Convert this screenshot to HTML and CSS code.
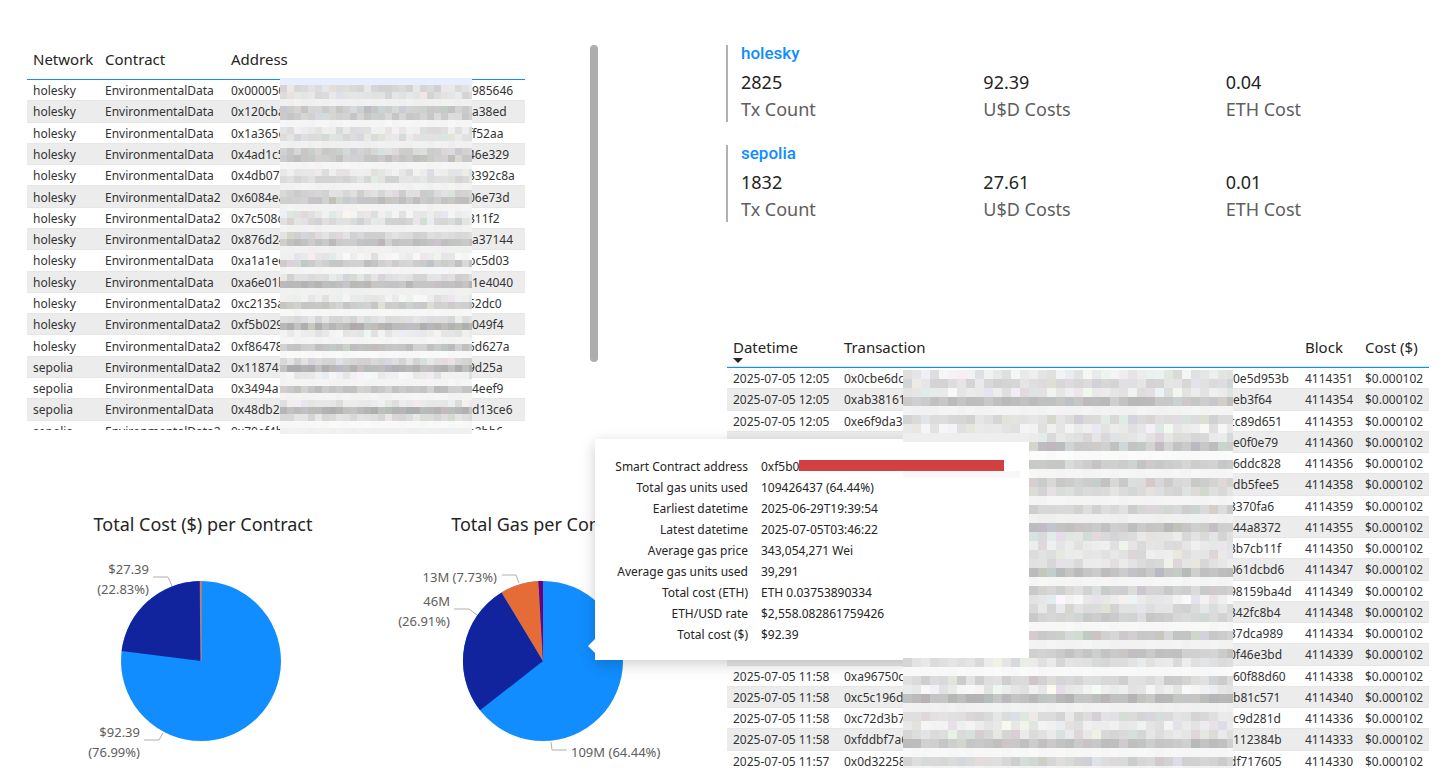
FILE: index.html
```html
<!DOCTYPE html>
<html lang="en">
<head>
<meta charset="utf-8">
<title>Contract costs</title>
<link rel="stylesheet" href="styles.css">
</head>
<body>
<main class="report">
  <section class="column">
    <div class="panel panel-contracts">
      <div class="viewport">
        <table class="grid contracts">
          <colgroup><col class="c-network"><col class="c-contract"><col></colgroup>
          <thead><tr><th>Network</th><th>Contract</th><th>Address</th></tr></thead>
          <tbody id="contracts"></tbody>
        </table>
      </div>
      <canvas class="mosaic mosaic-contracts" id="mosaic-contracts" width="192" height="356"></canvas>
      <div class="thumb"></div>
    </div>
    <div class="charts">
      <figure class="chart">
        <figcaption>Total Cost ($) per Contract</figcaption>
        <svg viewBox="0 0 342 230" role="img" aria-label="Total Cost ($) per Contract">
          <g transform="translate(171 116)">
            <circle r="80" fill="#118dff"/>
            <path d="M0 0L-79.4 -10A80 80 0 0 1 -.9 -80Z" fill="#12239e"/>
            <path d="M0 0L-.9 -80H.3Z" fill="#e66c37" stroke="#e6906c" stroke-width=".5"/>
          </g>
          <g class="leader"><path d="M123 32H138L142 41"/><path d="M114 195H129L133 188"/></g>
          <g class="label end">
            <text x="119" y="29">$27.39</text><text x="119" y="49">(22.83%)</text>
            <text x="110" y="192">$92.39</text><text x="110" y="212">(76.99%)</text>
          </g>
        </svg>
      </figure>
      <figure class="chart">
        <figcaption>Total Gas per Contract</figcaption>
        <svg viewBox="0 0 342 230" role="img" aria-label="Total Gas per Contract">
          <g transform="translate(171 116)">
            <circle r="80" fill="#118dff"/>
            <path d="M0 0L-63 49.3A80 80 0 0 1 -41.4 -68.5Z" fill="#12239e"/>
            <path d="M0 0L-41.4 -68.5A80 80 0 0 1 -4.6 -79.9Z" fill="#e66c37"/>
            <path d="M0 0L-4.6 -79.9A80 80 0 0 1 0 -80Z" fill="#6b007b"/>
          </g>
          <g class="leader"><path d="M130 30H144L147 38"/><path d="M82 64H97L105 70"/><path d="M179 197L180 205H195"/></g>
          <g class="label end">
            <text x="125" y="37">13M (7.73%)</text>
            <text x="78" y="61">46M</text><text x="78" y="81">(26.91%)</text>
          </g>
          <g class="label"><text x="199" y="212">109M (64.44%)</text></g>
        </svg>
      </figure>
    </div>
  </section>

  <section class="column">
    <article class="card">
      <h2>holesky</h2>
      <dl>
        <div><dd>2825</dd><dt>Tx Count</dt></div>
        <div><dd>92.39</dd><dt>U$D Costs</dt></div>
        <div><dd>0.04</dd><dt>ETH Cost</dt></div>
      </dl>
    </article>
    <article class="card">
      <h2>sepolia</h2>
      <dl>
        <div><dd>1832</dd><dt>Tx Count</dt></div>
        <div><dd>27.61</dd><dt>U$D Costs</dt></div>
        <div><dd>0.01</dd><dt>ETH Cost</dt></div>
      </dl>
    </article>
    <div class="panel panel-transactions">
      <div class="viewport">
        <table class="grid transactions">
          <colgroup><col class="c-date"><col><col class="c-block"><col class="c-cost"></colgroup>
          <thead><tr><th aria-sort="descending">Datetime<span class="sort"></span></th><th>Transaction</th><th>Block</th><th>Cost ($)</th></tr></thead>
          <tbody id="transactions"></tbody>
        </table>
      </div>
      <canvas class="mosaic mosaic-transactions" id="mosaic-transactions" width="330" height="398"></canvas>
    </div>
  </section>

  <aside class="tooltip" role="tooltip">
    <dl>
      <dt>Smart Contract address</dt><dd class="redacted">0xf5b0<span class="bar"></span></dd>
      <dt>Total gas units used</dt><dd>109426437 (64.44%)</dd>
      <dt>Earliest datetime</dt><dd>2025-06-29T19:39:54</dd>
      <dt>Latest datetime</dt><dd>2025-07-05T03:46:22</dd>
      <dt>Average gas price</dt><dd>343,054,271 Wei</dd>
      <dt>Average gas units used</dt><dd>39,291</dd>
      <dt>Total cost (ETH)</dt><dd>ETH 0.03753890334</dd>
      <dt>ETH/USD rate</dt><dd>$2,558.082861759426</dd>
      <dt>Total cost ($)</dt><dd>$92.39</dd>
    </dl>
  </aside>
</main>
<script src="report.js"></script>
</body>
</html>
```
FILE: styles.css
```css
* { box-sizing: border-box; }
body {
  margin: 0;
  background: #fff;
  color: #252423;
  font-family: "Noto Sans", "Open Sans", sans-serif;
  font-size: 12px;
}
.report {
  position: relative;
  display: grid;
  grid-template-columns: 700fr 702fr;
  min-height: 100vh;
  padding: 45px 12px 0 27px;
  overflow: hidden;
}
.column { min-width: 0; }
dl, dd, h2, figure { margin: 0; }

/* tables */
.panel { position: relative; }
.panel-contracts { width: 572px; }
.panel-transactions { margin-top: 111px; }
.viewport { overflow: hidden; }
.panel-contracts .viewport { height: 385px; width: 498px; }
.panel-transactions .viewport { height: 435px; }
.grid { width: 100%; table-layout: fixed; border-spacing: 0; }
.contracts { height: 397px; }
.transactions { height: 439px; }
.c-network { width: 72px; }
.c-contract { width: 126px; }
.c-date { width: 111px; }
.c-block { width: 60px; }
.c-cost { width: 70px; }
.grid th {
  height: 35px;
  padding: 0 0 0 6px;
  border-bottom: 1px solid #118dff;
  text-align: left;
  vertical-align: top;
  font-size: 15px;
  font-weight: 400;
  line-height: 28px;
  position: relative;
  white-space: nowrap;
}
.transactions th { box-shadow: inset 0 -1px #d6eaff; }
.grid td {
  padding: 2px 0 0 6px;
  border-bottom: 1px solid #e6e6e6;
  line-height: 18px;
  white-space: nowrap;
  color: #333;
}
.grid tbody tr:nth-child(even) td { background: #ececec; }
.sort {
  position: absolute;
  left: 6px;
  bottom: 4px;
  border: solid transparent;
  border-width: 5px 5px 0;
  border-top-color: #252423;
}
.hash { display: flex; }
.contracts .head { width: 241px; }
.transactions .head { width: 389px; }
.cut { margin-left: -4px; }
.thumb {
  position: absolute;
  top: 0;
  right: 1px;
  width: 8px;
  height: 317px;
  border-radius: 4px;
  background: #adadad;
}
.mosaic { position: absolute; z-index: 2; }
.mosaic-contracts { left: 253px; top: 33px; }
.mosaic-transactions { left: 176px; top: 37px; }

/* pie charts */
.charts {
  display: grid;
  grid-template-columns: 342px 342px;
  margin: 80px 0 0 3px;
}
.chart figcaption {
  height: 35px;
  padding-left: 4px;
  text-align: center;
  font-size: 18px;
  line-height: 28px;
}
.chart svg { display: block; width: 100%; }
.label { font-size: 13px; fill: #605e5c; }
.end { text-anchor: end; }
.leader { fill: none; stroke: #b3b0ad; stroke-width: 1; }

/* summary cards */
.card {
  height: 77px;
  margin-left: -1px;
  padding-left: 13px;
  border-left: 2px solid #b3b0ad;
}
.card + .card { margin-top: 23px; }
.card h2 {
  color: #118dff;
  font: 500 17px/16px Roboto, sans-serif;
  margin-bottom: 8px;
}
.card dl { display: grid; grid-template-columns: 242fr 242fr 203fr; }
.card dl div { display: flex; flex-direction: column; font-size: 18px; line-height: 27px; }
.card dt { color: #605e5c; }

/* chart tooltip */
.tooltip {
  position: absolute;
  left: 595px;
  top: 439px;
  width: 434px;
  padding: 17px 16px 15px;
  background: #fff;
  box-shadow: 0 4px 14px rgba(0, 0, 0, .2);
}
.tooltip::before {
  content: "";
  position: absolute;
  left: -7px;
  bottom: 7px;
  border: solid transparent;
  border-width: 7px 7px 7px 0;
  border-right-color: #fff;
}
.tooltip dl {
  display: grid;
  grid-template-columns: 137px 1fr;
  column-gap: 13px;
  line-height: 21px;
  white-space: nowrap;
}
.tooltip dt { text-align: right; justify-self: end; }
.redacted { display: flex; position: relative; }
.bar {
  position: absolute;
  left: 38px;
  top: 4px;
  z-index: 3;
  width: 205px;
  height: 11px;
  background: #d34042;
}
```
FILE: report.js
```js
// Rows: a leading "~" marks a tail whose first glyph sits under the redaction.
const contracts = [
  ["holesky", "EnvironmentalData", "0x000050", "985646"],
  ["holesky", "EnvironmentalData", "0x120cba", "a38ed"],
  ["holesky", "EnvironmentalData", "0x1a365e", "~ff52aa"],
  ["holesky", "EnvironmentalData", "0x4ad1c5", "~46e329"],
  ["holesky", "EnvironmentalData", "0x4db07a", "~3392c8a"],
  ["holesky", "EnvironmentalData2", "0x6084ea", "~06e73d"],
  ["holesky", "EnvironmentalData2", "0x7c508c", "~311f2"],
  ["holesky", "EnvironmentalData2", "0x876d24", "a37144"],
  ["holesky", "EnvironmentalData", "0xa1a1ee", "~bc5d03"],
  ["holesky", "EnvironmentalData", "0xa6e01b", "1e4040"],
  ["holesky", "EnvironmentalData2", "0xc2135a", "~52dc0"],
  ["holesky", "EnvironmentalData2", "0xf5b029", "049f4"],
  ["holesky", "EnvironmentalData2", "0xf86478", "~5d627a"],
  ["sepolia", "EnvironmentalData2", "0x118741", "~9d25a"],
  ["sepolia", "EnvironmentalData", "0x3494a1", "4eef9"],
  ["sepolia", "EnvironmentalData", "0x48db2a", "d13ce6"],
  ["sepolia", "EnvironmentalData2", "0x70ef4b", "~a2bb6"]
];
const transactions = [
  ["2025-07-05 12:05", "0x0cbe6dc", "0e5d953b", 4114351],
  ["2025-07-05 12:05", "0xab38161", "eb3f64", 4114354],
  ["2025-07-05 12:05", "0xe6f9da32", "~cc89d651", 4114353],
  ["", "", "e0f0e79", 4114360],
  ["", "", "6ddc828", 4114356],
  ["", "", "db5fee5", 4114358],
  ["", "", "~3370fa6", 4114359],
  ["", "", "44a8372", 4114355],
  ["", "", "~3b7cb11f", 4114350],
  ["", "", "~061dcbd6", 4114347],
  ["", "", "~98159ba4d", 4114349],
  ["", "", "~342fc8b4", 4114348],
  ["", "", "~37dca989", 4114334],
  ["", "", "~0f46e3bd", 4114339],
  ["2025-07-05 11:58", "0xa96750c", "60f88d60", 4114338],
  ["2025-07-05 11:58", "0xc5c196d", "b81c571", 4114340],
  ["2025-07-05 11:58", "0xc72d3b7", "c9d281d", 4114336],
  ["2025-07-05 11:58", "0xfddbf7a6", "112384b", 4114333],
  ["2025-07-05 11:57", "0x0d32258", "~df717605", 4114330]
];

function hash(head, tail) {
  const cut = tail[0] === "~";
  return `<div class="hash"><span class="head">${head}</span><span class="${cut ? "cut" : "tail"}">${cut ? tail.slice(1) : tail}</span></div>`;
}
const row = cells => `<tr>${cells.map(c => `<td>${c}</td>`).join("")}</tr>`;
document.getElementById("contracts").innerHTML =
  contracts.map(r => row([r[0], r[1], hash(r[2], r[3])])).join("");
document.getElementById("transactions").innerHTML =
  transactions.map(r => row([r[0], hash(r[1], r[2]), r[3], "$0.000102"])).join("");

// Redaction mosaics: one base grey per tile row, with a small spread between tiles.
let seed = 7;
function rand() {
  seed = (seed * 16807) % 2147483647;
  return seed / 2147483647;
}
function mosaic(id, size, rows, skip) {
  const canvas = document.getElementById(id);
  const ctx = canvas.getContext("2d");
  rows.split(" ").forEach((hex, r) => {
    const base = parseInt(hex, 16);
    const spread = base >= 0xf0 ? 3 : 24;
    for (let x = 0; x < canvas.width; x += size) {
      if (skip && skip(x, r * size)) continue;
      const g = base + (rand() - .5) * spread;
      const tint = rand() > .75 && spread > 3 ? 14 : 2;
      const c = [0, 0, 0].map(() => Math.min(255, Math.round(g + (rand() - .5) * tint)));
      ctx.fillStyle = `rgb(${c})`;
      ctx.fillRect(x, r * size, size, size);
    }
  });
  return ctx;
}
const left = mosaic("mosaic-contracts", 7,
  "ee dd df f0 cc d0 f5 e6 e0 f0 d2 c8 f5 e8 dc f2 d6 c8 f3 ea dc f2 da c4 f0 ee cc f5 dc be f0 " +
  "ec d0 f6 de b8 ec f4 c6 f8 dc b8 ec f4 c8 f4 e6 b9 e0 f8 f0");
left.fillStyle = "#e6eeff";
left.fillRect(0, 0, 192, 7);
const right = mosaic("mosaic-transactions", 9,
  "ea dd e9 c4 f3 dc ea e0 c9 fa cc f5 d2 dc f4 d6 f0 c4 e0 e6 e4 e2 c4 f5 d4 ec de d2 f8 ce f3 ca " +
  "e2 f8 d6 ec bf f1 de eb e0 c6 f7 d6 f2",
  (x, y) => x < 126 && y >= 72 && y < 288);
right.fillStyle = "#eeeeee";
right.fillRect(0, 63, 126, 9);
right.fillStyle = "#f8f8f8";
right.fillRect(0, 101, 117, 7);
```
